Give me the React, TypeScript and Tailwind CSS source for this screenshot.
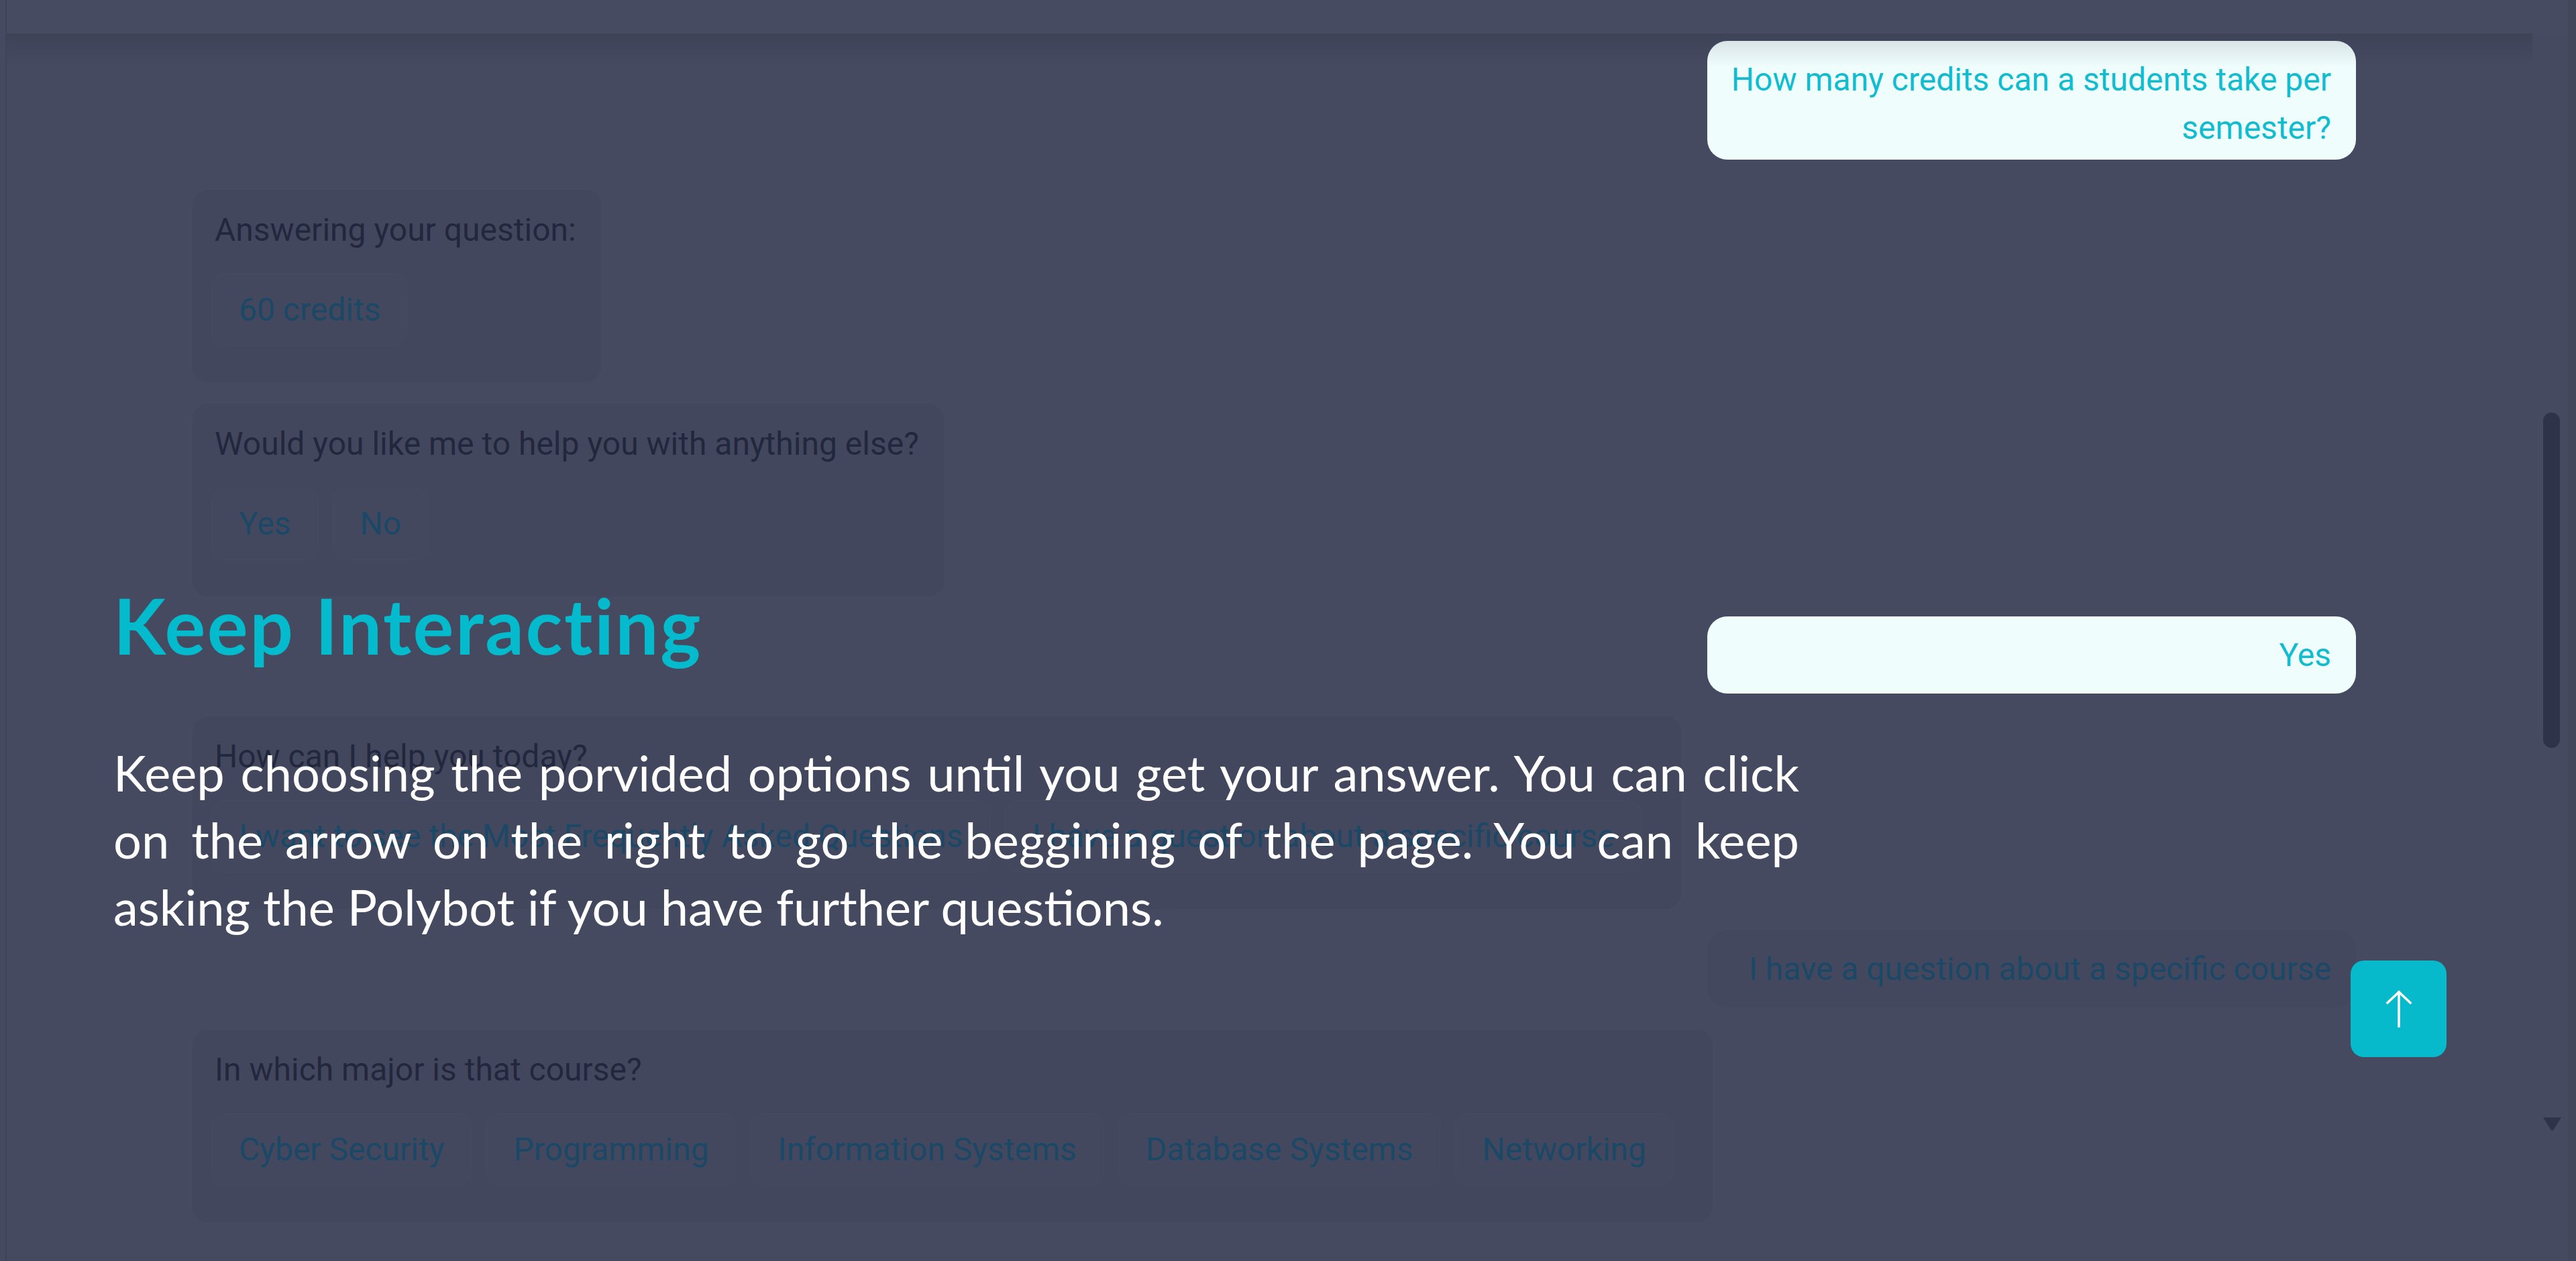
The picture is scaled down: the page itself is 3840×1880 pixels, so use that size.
import React from 'react';

type BotCardProps = {
    question: string;
    options: string[];
};

const BotCard: React.FC<BotCardProps> = ({ question, options }) => (
    <div className="w-fit rounded-[24px] bg-[#42475d] pl-[28px] pr-[37px] pt-[24px] pb-[54px]">
        <p className="pl-[5px] text-[48px] leading-[72px] text-[#23273e] whitespace-nowrap">{question}</p>
        <div className="mt-[29px] flex">
            {options.map(o => (
                <div
                    key={o}
                    className="mr-[21px] rounded-[20px] border border-[#464b62] bg-[#43485e] px-[40px] py-[17px] text-[48px] leading-[72px] text-[#1a4866] whitespace-nowrap"
                >
                    {o}
                </div>
            ))}
        </div>
    </div>
);

const UserBubble: React.FC<{ text: string; lit?: boolean; className?: string }> = ({ text, lit, className = '' }) => (
    <div
        className={`self-end w-[967px] rounded-[30px] pl-[24px] pr-[37px] pt-[22px] text-right text-[48px] leading-[72px] ${
            lit ? 'bg-[#f0fdfd] text-[#0fbcd0]' : 'bg-[#43485e] text-[#1a4866]'
        } ${className}`}
    >
        {text}
    </div>
);

export default function App() {
    return (
        <div className="relative flex h-[1880px] w-full overflow-hidden bg-[#454a60] font-['Roboto',sans-serif]">
            {/* left edge */}
            <div className="w-[10px] shrink-0 border-r-[2px] border-[#3f4357]" />

            <div className="flex min-w-0 flex-1 flex-col">
                <div className="h-[50px] shrink-0 bg-[#464b61]" />

                <div className="flex min-h-0 flex-1">
                    {/* chat */}
                    <div className="relative flex min-w-0 flex-1 flex-col pl-[277px] pr-[263px] pt-[11px]">
                        <div className="pointer-events-none absolute inset-x-0 top-0 z-10 h-[50px] bg-gradient-to-b from-[rgba(20,24,40,0.14)] to-transparent" />

                        <UserBubble lit text="How many credits can a students take per semester?" className="pb-[11px]" />

                        <div className="mt-[45px]">
                            <BotCard question="Answering your question:" options={['60 credits']} />
                        </div>
                        <div className="mt-[32px]">
                            <BotCard question="Would you like me to help you with anything else?" options={['Yes', 'No']} />
                        </div>

                        <UserBubble lit text="Yes" className="mt-[30px] h-[115px]" />

                        <div className="mt-[34px]">
                            <BotCard
                                question="How can I help you today?"
                                options={['I want to see the Most Frequently Asked Questions', 'I have a question about a specific course']}
                            />
                        </div>

                        <UserBubble text="I have a question about a specific course" className="mt-[32px] h-[115px]" />

                        <div className="mt-[33px]">
                            <BotCard
                                question="In which major is that course?"
                                options={['Cyber Security', 'Programming', 'Information Systems', 'Database Systems', 'Networking']}
                            />
                        </div>
                    </div>

                    {/* scrollbar */}
                    <div className="flex w-[53px] shrink-0 flex-col items-start pl-[16px]">
                        <div className="mt-[565px] h-[500px] w-[25px] rounded-full bg-[#2f3349]" />
                        <svg className="mt-[551px]" width="27" height="20" viewBox="0 0 27 20">
                            <path d="M0 0 H27 L15 19 Q13.5 20.5 12 19 Z" fill="#2f3349" />
                        </svg>
                    </div>
                </div>
            </div>

            {/* right edge */}
            <div className="w-[12px] shrink-0 bg-[#42475c]" />

            {/* tour popover */}
            <div className="absolute left-[169px] top-[864px] w-[2513px] font-['Lato',sans-serif]">
                <h1 className="text-[114px] font-bold leading-[1.2] tracking-[2.5px] text-[#04bacd]">Keep Interacting</h1>
                <p className="mt-[101px] text-justify text-[74px] leading-[100px] text-white">
                    Keep choosing the porvided options until you get your answer. You can click on the arrow on the right to go the beggining of the page. You can keep asking the Polybot if you have further questions.
                </p>
            </div>

            {/* back to top */}
            <button className="absolute left-[3504px] top-[1432px] flex h-[144px] w-[143px] items-center justify-center rounded-[20px] bg-[#06bacc]">
                <svg width="40" height="56" viewBox="0 0 40 56" fill="none" stroke="white" strokeWidth="3.5" strokeLinecap="square">
                    <path d="M20 3 V54" />
                    <path d="M3 19 L20 3 L37 19" />
                </svg>
            </button>
        </div>
    );
}
